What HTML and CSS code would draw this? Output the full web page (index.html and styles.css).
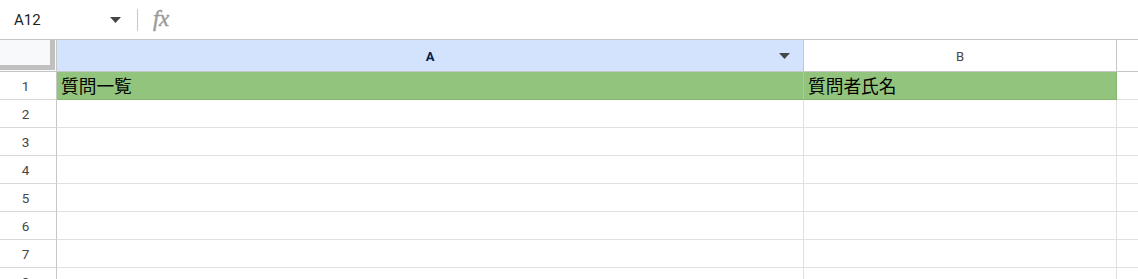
FILE: index.html
```html
<!DOCTYPE html>
<html lang="ja">
<head>
<meta charset="utf-8">
<title>Sheet</title>
<link rel="stylesheet" href="styles.css">
</head>
<body>
<div class="formula-bar">
  <div class="name-box">
    <span class="ref">A12</span>
    <svg class="caret" width="11" height="6" viewBox="0 0 11 6"><path d="M0 0h11L5.5 6z" fill="#444746"/></svg>
  </div>
  <div class="sep"></div>
  <div class="fx">fx</div>
</div>
<div class="grid">
  <div class="corner"></div>
  <div class="col-head sel">A<svg class="menu-caret" width="11" height="6" viewBox="0 0 11 6"><path d="M0 0h11L5.5 6z" fill="#444746"/></svg></div>
  <div class="col-head">B</div>
  <div class="col-head last"></div>

  <div class="row-head">1</div>
  <div class="cell green">質問一覧</div>
  <div class="cell green edge">質問者氏名</div>
  <div class="cell last"></div>

  <div class="row-head">2</div><div class="cell"></div><div class="cell"></div><div class="cell last"></div>
  <div class="row-head">3</div><div class="cell"></div><div class="cell"></div><div class="cell last"></div>
  <div class="row-head">4</div><div class="cell"></div><div class="cell"></div><div class="cell last"></div>
  <div class="row-head">5</div><div class="cell"></div><div class="cell"></div><div class="cell last"></div>
  <div class="row-head">6</div><div class="cell"></div><div class="cell"></div><div class="cell last"></div>
  <div class="row-head">7</div><div class="cell"></div><div class="cell"></div><div class="cell last"></div>
  <div class="row-head">8</div><div class="cell"></div><div class="cell"></div><div class="cell last"></div>
</div>
</body>
</html>
```
FILE: styles.css
```css
html, body {
  margin: 0;
  padding: 0;
  background: #fff;
  overflow: hidden;
}
body {
  font-family: Roboto, "Liberation Sans", Arial, "Noto Sans CJK JP", sans-serif;
  color: #1f1f1f;
}
.formula-bar {
  height: 39px;
  border-bottom: 1px solid #c4c7c5;
  display: flex;
  align-items: center;
}
.name-box {
  width: 123px;
  padding-left: 14px;
  box-sizing: border-box;
  display: flex;
  align-items: center;
  justify-content: space-between;
  padding-right: 2px;
}
.ref {
  font-size: 15px;
  color: #1f1f1f;
}
.sep {
  width: 1px;
  height: 22px;
  background: #c7c7c7;
  margin-left: 14px;
}
.fx {
  margin-left: 15px;
  font-family: "Liberation Serif", serif;
  font-style: italic;
  font-size: 23px;
  color: #9a9a9a;
  letter-spacing: -0.5px;
  padding-bottom: 2px;
  -webkit-text-stroke: 0.4px #9a9a9a;
}
.grid {
  display: grid;
  grid-template-columns: 57px 747px 313px 1fr;
  grid-template-rows: 32px repeat(8, 28px);
}
.corner {
  background: #f8f9fa;
  border-right: 1px solid #c4c7c5;
  border-bottom: 1px solid #c4c7c5;
  position: relative;
}
.corner::after {
  content: "";
  position: absolute;
  right: 1px;
  top: 0;
  bottom: 1px;
  width: 5px;
  background: #c0c0c0;
}
.corner::before {
  content: "";
  position: absolute;
  left: 0;
  right: 1px;
  bottom: 1px;
  height: 5px;
  background: #c0c0c0;
}
.col-head {
  border-right: 1px solid #c4c7c5;
  border-bottom: 1px solid #c4c7c5;
  display: flex;
  align-items: center;
  justify-content: center;
  font-size: 13px;
  color: #444746;
  position: relative;
  padding-top: 1px;
}
.col-head.sel {
  background: #d3e3fd;
  color: #041e49;
  font-weight: bold;
}
.col-head.last {
  border-right: none;
}
.menu-caret {
  position: absolute;
  right: 13px;
  top: 13px;
}
.row-head {
  border-right: 1px solid #c4c7c5;
  border-bottom: 1px solid #d7d7d7;
  display: flex;
  align-items: center;
  justify-content: center;
  font-size: 13.5px;
  color: #444746;
  padding-right: 5px;
}
.cell {
  border-right: 1px solid #e1e1e1;
  border-bottom: 1px solid #e1e1e1;
  display: flex;
  align-items: flex-end;
  font-family: "Noto Sans CJK JP", sans-serif;
  font-size: 17.7px;
  color: #000;
  padding-left: 4px;
  line-height: 1;
  padding-bottom: 4px;
  box-sizing: border-box;
}
.cell.green {
  background: #93c47d;
  border-bottom-color: #86b570;
  border-right-color: #a6cf94;
}
.cell.green.edge {
  border-right-color: #86b570;
}
.cell.last {
  border-right: none;
}
```
